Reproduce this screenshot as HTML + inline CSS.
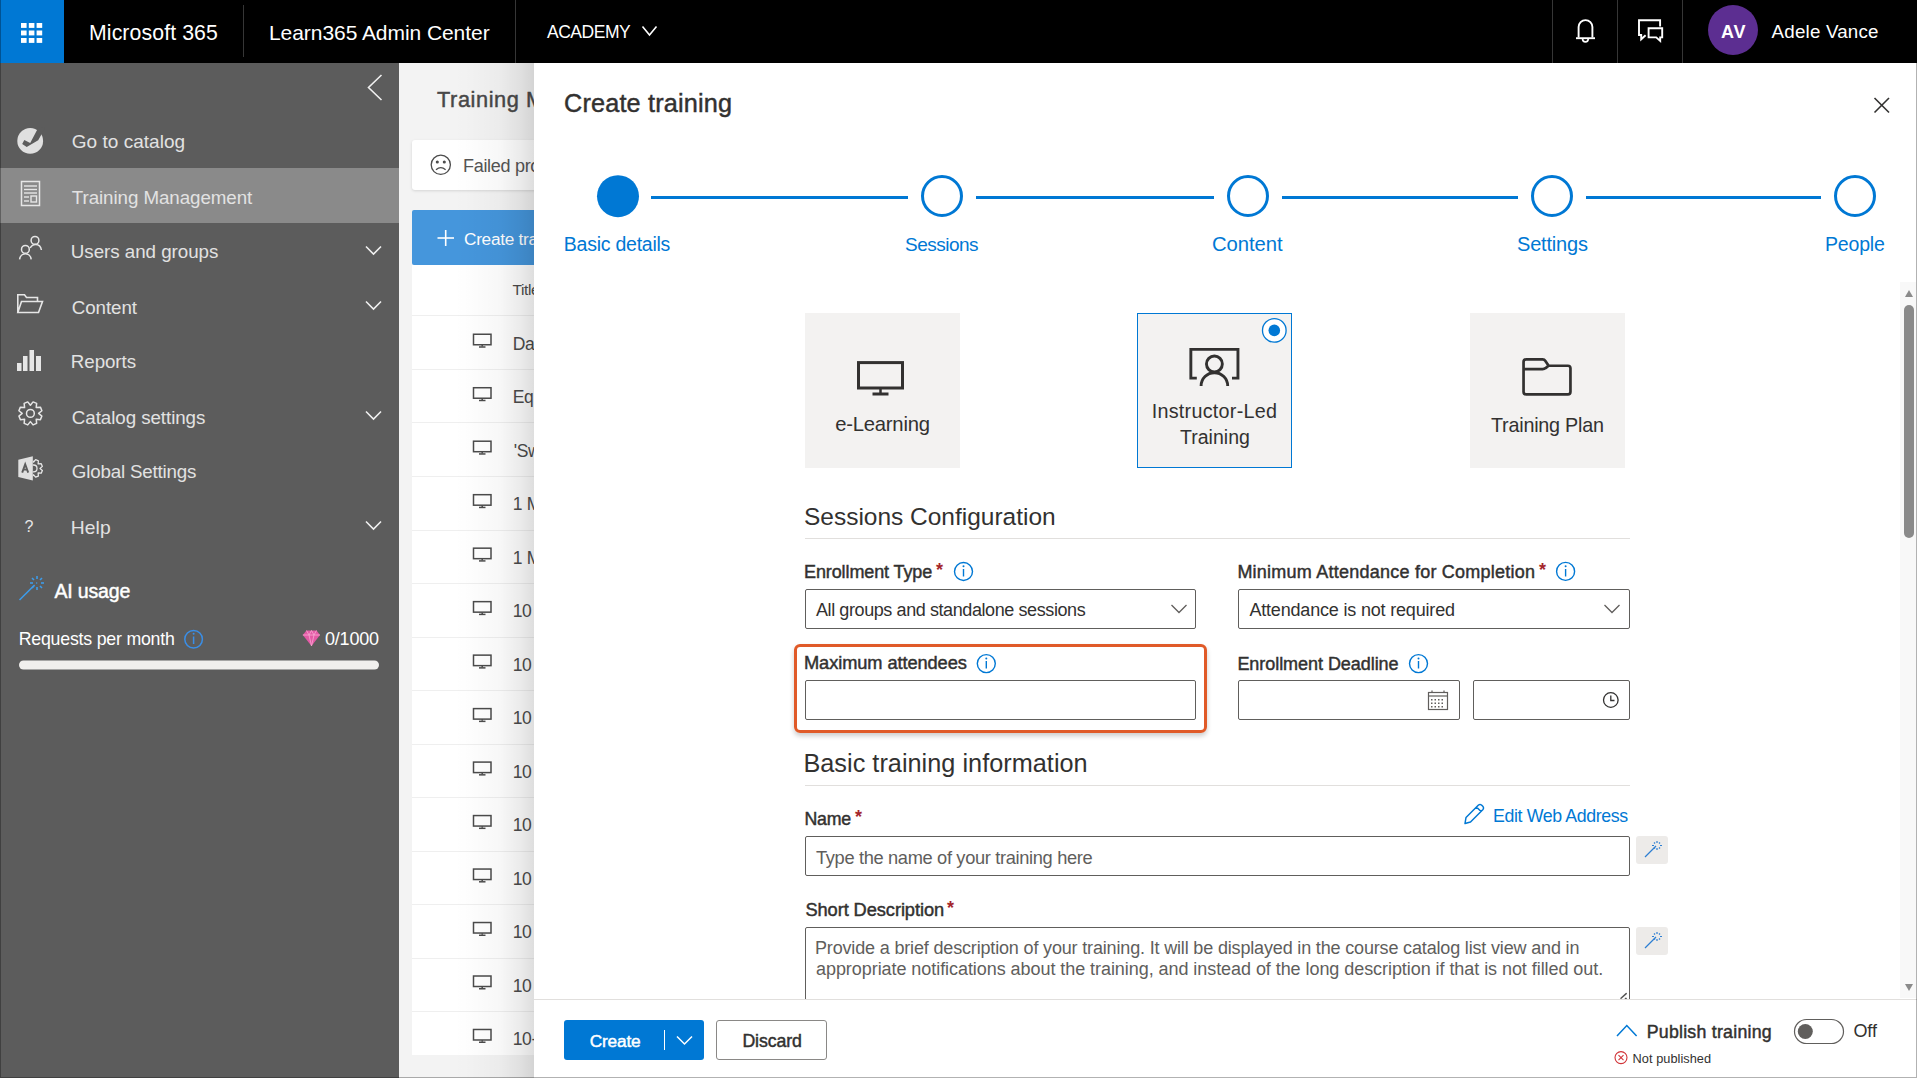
<!DOCTYPE html>
<html><head><meta charset="utf-8"><title>Create training</title>
<style>
html,body{margin:0;padding:0;width:1917px;height:1078px;overflow:hidden;background:#f3f3f3;font-family:"Liberation Sans",sans-serif;}
.a{position:absolute;}
.t{position:absolute;white-space:nowrap;}
svg{position:absolute;overflow:visible;}
#topbar{left:0;top:0;width:1917px;height:63px;background:#000;}
#waffle{left:0;top:0;width:64px;height:63px;background:#0078d4;}
.sep{position:absolute;width:1px;background:#363636;}
#sidebar{left:0;top:63px;width:399px;height:1015px;background:#5c5c5c;}
#sel{left:0;top:168px;width:399px;height:55px;background:#8a8a8a;}
#page{left:399px;top:63px;width:1518px;height:1015px;background:#f3f3f3;}
#panel{left:534px;top:63px;width:1383px;height:1015px;background:#fff;}
.tile{position:absolute;width:155px;height:155px;background:#f3f2f1;box-sizing:border-box;}
.inp{position:absolute;box-sizing:border-box;border:1px solid #605e5c;border-radius:2px;background:#fff;}
.hr{position:absolute;height:1px;background:#e1dfdd;}
.circ{position:absolute;width:42px;height:42px;border-radius:50%;box-sizing:border-box;border:3px solid #0078d4;background:#fff;}
.line{position:absolute;height:3px;background:#0078d4;top:196px;}
.star{position:absolute;color:#a4262c;font-weight:700;}
.row{position:absolute;left:412px;width:700px;height:1px;background:#efefef;}
</style></head><body>
<!-- page behind -->
<div id="page" class="a"></div>
<div class="a" style="left:412px;top:140px;width:600px;height:50px;background:#fff;border-radius:3px;box-shadow:0 1px 3px rgba(0,0,0,0.13);"></div>
<div class="a" style="left:412px;top:210px;width:600px;height:55px;background:#4596dc;border-radius:2px;"></div>
<div class="a" style="left:412px;top:265px;width:600px;height:790px;background:#fff;"></div>
<div id="rows"></div>
<div class="t" id="p0" style="left:437.00px;top:87px;font-size:21.75px;line-height:26px;letter-spacing:0.589px;color:#484848;font-weight:400;-webkit-text-stroke:0.45px #484848;">Training Management</div>
<div class="t" id="p1" style="left:463.00px;top:155px;font-size:18.0px;line-height:22px;letter-spacing:-0.300px;color:#555555;font-weight:400;">Failed processing</div>
<div class="t" id="p2" style="left:464.00px;top:229px;font-size:17.25px;line-height:21px;letter-spacing:-0.300px;color:#fff;font-weight:400;">Create training</div>
<div class="t" id="p3" style="left:512.50px;top:280px;font-size:15.5px;line-height:19px;letter-spacing:-0.381px;color:#4b4b4b;font-weight:400;">Title</div>
<div class="t" id="p4" style="left:512.70px;top:334px;font-size:17.5px;line-height:21px;letter-spacing:-0.300px;color:#4b4b4b;font-weight:400;">Data Protection</div>
<div class="t" id="p5" style="left:512.70px;top:387px;font-size:17.5px;line-height:21px;letter-spacing:-0.300px;color:#4b4b4b;font-weight:400;">Equality</div>
<div class="t" id="p6" style="left:513.70px;top:441px;font-size:17.5px;line-height:21px;letter-spacing:-0.300px;color:#4b4b4b;font-weight:400;">'Swiss</div>
<div class="t" id="p7" style="left:512.70px;top:494px;font-size:17.5px;line-height:21px;letter-spacing:-0.300px;color:#4b4b4b;font-weight:400;">1 Module</div>
<div class="t" id="p8" style="left:512.70px;top:548px;font-size:17.5px;line-height:21px;letter-spacing:-0.300px;color:#4b4b4b;font-weight:400;">1 Module</div>
<div class="t" id="p9" style="left:512.70px;top:601px;font-size:17.5px;line-height:21px;letter-spacing:-0.300px;color:#4b4b4b;font-weight:400;">10 Steps</div>
<div class="t" id="p10" style="left:512.70px;top:655px;font-size:17.5px;line-height:21px;letter-spacing:-0.300px;color:#4b4b4b;font-weight:400;">10 Steps</div>
<div class="t" id="p11" style="left:512.70px;top:708px;font-size:17.5px;line-height:21px;letter-spacing:-0.300px;color:#4b4b4b;font-weight:400;">10 Steps</div>
<div class="t" id="p12" style="left:512.70px;top:762px;font-size:17.5px;line-height:21px;letter-spacing:-0.300px;color:#4b4b4b;font-weight:400;">10 Steps</div>
<div class="t" id="p13" style="left:512.70px;top:815px;font-size:17.5px;line-height:21px;letter-spacing:-0.300px;color:#4b4b4b;font-weight:400;">10 Steps</div>
<div class="t" id="p14" style="left:512.70px;top:869px;font-size:17.5px;line-height:21px;letter-spacing:-0.300px;color:#4b4b4b;font-weight:400;">10 Steps</div>
<div class="t" id="p15" style="left:512.70px;top:922px;font-size:17.5px;line-height:21px;letter-spacing:-0.300px;color:#4b4b4b;font-weight:400;">10 Steps</div>
<div class="t" id="p16" style="left:512.70px;top:976px;font-size:17.5px;line-height:21px;letter-spacing:-0.300px;color:#4b4b4b;font-weight:400;">10 Steps</div>
<div class="t" id="p17" style="left:512.70px;top:1029px;font-size:17.5px;line-height:21px;letter-spacing:-0.300px;color:#4b4b4b;font-weight:400;">10-Minute</div>
<div class="row" style="top:315px;"></div>
<div class="row" style="top:369px;"></div>
<div class="row" style="top:422px;"></div>
<div class="row" style="top:476px;"></div>
<div class="row" style="top:530px;"></div>
<div class="row" style="top:583px;"></div>
<div class="row" style="top:637px;"></div>
<div class="row" style="top:690px;"></div>
<div class="row" style="top:744px;"></div>
<div class="row" style="top:797px;"></div>
<div class="row" style="top:851px;"></div>
<div class="row" style="top:904px;"></div>
<div class="row" style="top:958px;"></div>
<div class="row" style="top:1011px;"></div>
<svg style="left:0;top:0" width="1917" height="1078"><g fill="none" stroke="#4b4b4b" stroke-width="1.5"><rect x="473.5" y="334.25" width="17.5" height="10.5"/><line x1="482.2" y1="345.00" x2="482.2" y2="346.50"/><line x1="479" y1="347.00" x2="485.5" y2="347.00"/><rect x="473.5" y="387.73" width="17.5" height="10.5"/><line x1="482.2" y1="398.48" x2="482.2" y2="399.98"/><line x1="479" y1="400.48" x2="485.5" y2="400.48"/><rect x="473.5" y="441.21" width="17.5" height="10.5"/><line x1="482.2" y1="451.96" x2="482.2" y2="453.46"/><line x1="479" y1="453.96" x2="485.5" y2="453.96"/><rect x="473.5" y="494.69" width="17.5" height="10.5"/><line x1="482.2" y1="505.44" x2="482.2" y2="506.94"/><line x1="479" y1="507.44" x2="485.5" y2="507.44"/><rect x="473.5" y="548.17" width="17.5" height="10.5"/><line x1="482.2" y1="558.92" x2="482.2" y2="560.42"/><line x1="479" y1="560.92" x2="485.5" y2="560.92"/><rect x="473.5" y="601.65" width="17.5" height="10.5"/><line x1="482.2" y1="612.40" x2="482.2" y2="613.90"/><line x1="479" y1="614.40" x2="485.5" y2="614.40"/><rect x="473.5" y="655.13" width="17.5" height="10.5"/><line x1="482.2" y1="665.88" x2="482.2" y2="667.38"/><line x1="479" y1="667.88" x2="485.5" y2="667.88"/><rect x="473.5" y="708.61" width="17.5" height="10.5"/><line x1="482.2" y1="719.36" x2="482.2" y2="720.86"/><line x1="479" y1="721.36" x2="485.5" y2="721.36"/><rect x="473.5" y="762.09" width="17.5" height="10.5"/><line x1="482.2" y1="772.84" x2="482.2" y2="774.34"/><line x1="479" y1="774.84" x2="485.5" y2="774.84"/><rect x="473.5" y="815.57" width="17.5" height="10.5"/><line x1="482.2" y1="826.32" x2="482.2" y2="827.82"/><line x1="479" y1="828.32" x2="485.5" y2="828.32"/><rect x="473.5" y="869.05" width="17.5" height="10.5"/><line x1="482.2" y1="879.80" x2="482.2" y2="881.30"/><line x1="479" y1="881.80" x2="485.5" y2="881.80"/><rect x="473.5" y="922.53" width="17.5" height="10.5"/><line x1="482.2" y1="933.28" x2="482.2" y2="934.78"/><line x1="479" y1="935.28" x2="485.5" y2="935.28"/><rect x="473.5" y="976.01" width="17.5" height="10.5"/><line x1="482.2" y1="986.76" x2="482.2" y2="988.26"/><line x1="479" y1="988.76" x2="485.5" y2="988.76"/><rect x="473.5" y="1029.49" width="17.5" height="10.5"/><line x1="482.2" y1="1040.24" x2="482.2" y2="1041.74"/><line x1="479" y1="1042.24" x2="485.5" y2="1042.24"/></g><g fill="none" stroke="#4b4b4b" stroke-width="1.3"><circle cx="440.8" cy="164.8" r="9.6"/><circle cx="437.3" cy="162" r="0.9" fill="#4b4b4b"/><circle cx="444.3" cy="162" r="0.9" fill="#4b4b4b"/><path d="M436,169.8 Q440.8,165.5 445.6,169.8"/></g><g stroke="#fff" stroke-width="1.6"><line x1="437.5" y1="238" x2="454" y2="238"/><line x1="445.7" y1="230" x2="445.7" y2="246"/></g></svg>
<!-- shadow gradient -->
<div class="a" style="left:454px;top:63px;width:80px;height:1015px;background:linear-gradient(to right,rgba(0,0,0,0) 0%,rgba(0,0,0,0.008) 20%,rgba(0,0,0,0.033) 57.5%,rgba(0,0,0,0.078) 82.5%,rgba(0,0,0,0.13) 100%);"></div>

<!-- top bar -->
<div id="topbar" class="a"></div>
<div id="waffle" class="a"></div>
<svg style="left:0;top:0" width="64" height="63"><g fill="#fff">
<rect x="21" y="23" width="5.6" height="4.9"/><rect x="28.8" y="23" width="5.6" height="4.9"/><rect x="36.6" y="23" width="5.6" height="4.9"/>
<rect x="21" y="30.5" width="5.6" height="4.9"/><rect x="28.8" y="30.5" width="5.6" height="4.9"/><rect x="36.6" y="30.5" width="5.6" height="4.9"/>
<rect x="21" y="38" width="5.6" height="4.9"/><rect x="28.8" y="38" width="5.6" height="4.9"/><rect x="36.6" y="38" width="5.6" height="4.9"/>
</g></svg>
<div class="sep" style="left:243px;top:5px;height:52px;"></div>
<div class="sep" style="left:515px;top:0;height:63px;"></div>
<div class="sep" style="left:1552px;top:0;height:63px;"></div>
<div class="sep" style="left:1617px;top:0;height:63px;"></div>
<div class="sep" style="left:1682px;top:0;height:63px;"></div>
<svg style="left:0;top:0" width="1917" height="63">
<polyline points="642.5,26.5 649.5,35 656.5,26.5" fill="none" stroke="#fff" stroke-width="1.6"/>
<!-- bell -->
<path d="M1578.6,37.5 V27 A6.9,6.9 0 0 1 1592.4,27 V37.5" fill="none" stroke="#fff" stroke-width="1.9"/>
<line x1="1576" y1="38.2" x2="1595" y2="38.2" stroke="#fff" stroke-width="1.9"/>
<path d="M1582.6,39 A2.8,2.8 0 0 0 1588.2,39" fill="none" stroke="#fff" stroke-width="1.7"/>
<!-- chat -->
<path d="M1660.1,26.5 V20.2 H1639 V35 H1641.2 V39.3 L1645.6,35.2" fill="none" stroke="#fff" stroke-width="1.9" stroke-linejoin="miter"/>
<path d="M1648.6,28.3 H1662.2 V37.4 H1660.2 V40.9 L1656.2,37.4 H1648.6 Z" fill="none" stroke="#fff" stroke-width="1.9" stroke-linejoin="miter"/>
<circle cx="1733" cy="30" r="25" fill="#5c2e91"/>
</svg>

<!-- sidebar -->
<div id="sidebar" class="a"></div>
<div id="sel" class="a"></div>
<svg style="left:0;top:0" width="399" height="1078">
<polyline points="381.5,75 368.5,87.5 381.5,100" fill="none" stroke="#f0f0f0" stroke-width="1.6"/>
<!-- check circle -->
<circle cx="30.2" cy="140.9" r="12.9" fill="#e0e0e0"/>
<polygon points="24.3,140 22.2,144.1 26.7,146.9 38.2,140.3 41.4,134.6 45,128 38.9,126.6 30.2,143.1" fill="#5c5c5c"/>
<!-- doc icon -->
<rect x="21.5" y="181.5" width="18" height="24" fill="none" stroke="#e6e6e6" stroke-width="1.5"/>
<g stroke="#e6e6e6" stroke-width="1.4"><line x1="24" y1="186" x2="37" y2="186"/><line x1="24" y1="189.5" x2="37" y2="189.5"/><line x1="24" y1="193" x2="37" y2="193"/><line x1="24" y1="197" x2="29" y2="197"/><line x1="24" y1="201" x2="29" y2="201"/></g>
<rect x="31" y="196" width="5.5" height="6" fill="none" stroke="#e6e6e6" stroke-width="1.4"/>
<!-- users -->
<g fill="none" stroke="#e6e6e6" stroke-width="1.5">
<circle cx="35" cy="240.4" r="3.9"/><path d="M30.2,248 C31.5,245.6 33.5,244.6 35.6,244.6 C38.6,244.6 40.9,246.8 41.4,250"/>
<circle cx="25.4" cy="249.4" r="3.9"/><path d="M19.6,259.3 C20,256 22.5,253.7 25.4,253.7 C28.3,253.7 30.8,256 31.2,259.3"/>
</g>
<!-- folder open -->
<path d="M17.8,312.5 V294.8 H24.5 L26.5,297.5 H37.5 V301.5 M17.8,312.5 L21.5,301.5 H42.5 L38.5,312.5 Z" fill="none" stroke="#e6e6e6" stroke-width="1.6" stroke-linejoin="miter"/>
<!-- bars -->
<g fill="#e6e6e6"><rect x="17" y="363" width="4.5" height="8"/><rect x="23" y="356" width="4.5" height="15"/><rect x="29.5" y="350" width="4.5" height="21"/><rect x="36" y="356" width="5" height="15"/></g>
<!-- gear -->
<path d="M30.40,405.20 L33.05,401.90 L36.65,403.39 L36.20,407.60 L40.41,407.15 L41.90,410.75 L38.60,413.40 L41.90,416.05 L40.41,419.65 L36.20,419.20 L36.65,423.41 L33.05,424.90 L30.40,421.60 L27.75,424.90 L24.15,423.41 L24.60,419.20 L20.39,419.65 L18.90,416.05 L22.20,413.40 L18.90,410.75 L20.39,407.15 L24.60,407.60 L24.15,403.39 L27.75,401.90 Z" fill="none" stroke="#e6e6e6" stroke-width="1.5" stroke-linejoin="round"/>
<circle cx="30.4" cy="413.4" r="3.9" fill="none" stroke="#e6e6e6" stroke-width="1.5"/>
<!-- global settings A+gear -->
<clipPath id="gclip"><rect x="32.8" y="450" width="20" height="40"/></clipPath>
<g clip-path="url(#gclip)"><path d="M33.60,462.00 L35.62,459.63 L38.37,460.77 L38.13,463.87 L41.23,463.63 L42.37,466.38 L40.00,468.40 L42.37,470.42 L41.23,473.17 L38.13,472.93 L38.37,476.03 L35.62,477.17 L33.60,474.80 L31.58,477.17 L28.83,476.03 L29.07,472.93 L25.97,473.17 L24.83,470.42 L27.20,468.40 L24.83,466.38 L25.97,463.63 L29.07,463.87 L28.83,460.77 L31.58,459.63 Z" fill="none" stroke="#e6e6e6" stroke-width="1.3" stroke-linejoin="round"/>
<circle cx="33.6" cy="468.4" r="3.4" fill="none" stroke="#e6e6e6" stroke-width="1.3"/></g>
<path d="M18.3,459.8 L32.8,456.3 V480.4 L18.3,477 Z" fill="#e0e0e0"/>
<path d="M22.2,472.6 L25.2,464.2 L28.2,472.6 M23.3,469.6 H27.1" fill="none" stroke="#5c5c5c" stroke-width="1.9"/>
<text x="24.5" y="532" font-family="Liberation Sans" font-size="16" fill="#e6e6e6">?</text>
<g fill="none" stroke="#f0f0f0" stroke-width="1.6">
<polyline points="366,246.5 373.5,254 381,246.5"/>
<polyline points="366,301.5 373.5,309 381,301.5"/>
<polyline points="366,411.5 373.5,419 381,411.5"/>
<polyline points="366,521.5 373.5,529 381,521.5"/>
</g>
<!-- wand -->
<g stroke="#3d9be9" stroke-width="1.6" fill="none">
<line x1="19.5" y1="600" x2="34.6" y2="585"/><line x1="36.2" y1="583" x2="37.2" y2="583"/>
<line x1="37" y1="576" x2="37" y2="579"/><line x1="37" y1="587" x2="37" y2="590"/>
<line x1="30" y1="583" x2="33" y2="583"/><line x1="41" y1="583" x2="44" y2="583"/>
<line x1="32" y1="578" x2="34" y2="580"/><line x1="40" y1="586" x2="42" y2="588"/>
<line x1="42" y1="578" x2="40" y2="580"/><line x1="34" y1="586" x2="32" y2="588"/>
</g>
<circle cx="193.6" cy="639.2" r="8.8" fill="none" stroke="#3a8ee6" stroke-width="1.5"/>
<line x1="193.6" y1="636.5" x2="193.6" y2="644" stroke="#3a8ee6" stroke-width="1.5"/>
<circle cx="193.6" cy="633.8" r="1" fill="#3a8ee6"/>
<!-- diamond -->
<path d="M302.8,635 L306.5,630.5 H316.5 L320,635 L311.5,646 Z" fill="#e45aa6"/>
<path d="M302.8,635 H320 M306.5,630.5 L309,635 L311.5,646 M316.5,630.5 L314,635 L311.5,646 M309,635 L311.5,630.5 L314,635" fill="none" stroke="#f7a8d2" stroke-width="0.8"/>
<rect x="19" y="660.5" width="360" height="9" rx="4.5" fill="#f0efed"/>
</svg>

<!-- panel shadow + panel -->
<div id="panel" class="a"></div>
<svg style="left:0;top:0" width="1917" height="1078">
<!-- close X -->
<g stroke="#323130" stroke-width="1.6"><line x1="1874.5" y1="98" x2="1889" y2="112.5"/><line x1="1889" y1="98" x2="1874.5" y2="112.5"/></g>
<!-- stepper -->
<circle cx="618" cy="196.2" r="21" fill="#0078d4"/>
</svg>
<div class="line" style="left:651px;width:257px;"></div>
<div class="line" style="left:976px;width:238px;"></div>
<div class="line" style="left:1282px;width:236px;"></div>
<div class="line" style="left:1586px;width:235px;"></div>
<div class="circ" style="left:920.5px;top:175px;"></div>
<div class="circ" style="left:1227px;top:175px;"></div>
<div class="circ" style="left:1531px;top:175px;"></div>
<div class="circ" style="left:1834px;top:175px;"></div>

<!-- scrollbar -->
<div class="a" style="left:1900px;top:282px;width:16px;height:716px;background:#f8f8f8;"></div>
<div class="a" style="left:1904px;top:305px;width:10px;height:233px;background:#8a8a8a;border-radius:5px;"></div>
<svg style="left:0;top:0" width="1917" height="1078">
<path d="M1905,297 L1909,290 L1913,297 Z" fill="#8a8a8a"/>
<path d="M1905,984 L1909,991 L1913,984 Z" fill="#8a8a8a"/>
</svg>

<!-- tiles -->
<div class="tile" style="left:805px;top:313px;"></div>
<div class="tile" style="left:1137px;top:313px;border:1px solid #0078d4;"></div>
<div class="tile" style="left:1470px;top:313px;"></div>
<svg style="left:0;top:0" width="1917" height="1078">
<!-- monitor -->
<rect x="858.5" y="362.6" width="44" height="25.4" fill="none" stroke="#323130" stroke-width="3"/>
<line x1="880.5" y1="389" x2="880.5" y2="393" stroke="#323130" stroke-width="2.5"/>
<line x1="872.5" y1="394" x2="888.5" y2="394" stroke="#323130" stroke-width="3"/>
<!-- instructor -->
<path d="M1196.8,378.1 H1190.85 V349.35 H1237.95 V378.1 H1232" fill="none" stroke="#323130" stroke-width="2.9"/>
<circle cx="1214.4" cy="364" r="7.95" fill="none" stroke="#323130" stroke-width="2.9"/>
<path d="M1201.1,386 A13.3,13.3 0 0 1 1227.7,386" fill="none" stroke="#323130" stroke-width="2.9"/>
<!-- radio -->
<circle cx="1274.3" cy="330.4" r="11.8" fill="#fff" stroke="#0078d4" stroke-width="1.3"/>
<circle cx="1274.3" cy="330.4" r="5.8" fill="#0078d4"/>
<!-- folder -->
<path d="M1523.55,392 V362 Q1523.55,359.45 1526.1,359.45 H1542.6 Q1544.4,359.45 1545.4,361 L1548.6,365.75 H1567.9 Q1570.45,365.75 1570.45,368.3 V391.8 Q1570.45,394.35 1567.9,394.35 H1526.1 Q1523.55,394.35 1523.55,391.8 Z M1523.55,369.2 H1542.6 Q1544.4,369.2 1545.6,368.1 L1548.6,365.75" fill="none" stroke="#323130" stroke-width="2.7" stroke-linejoin="round"/>
</svg>

<div class="hr" style="left:805px;top:538px;width:825px;"></div>
<div class="hr" style="left:805px;top:785px;width:825px;"></div>
<!-- inputs -->
<div class="inp" style="left:805px;top:589px;width:391px;height:40px;"></div>
<div class="inp" style="left:1238px;top:589px;width:392px;height:40px;"></div>
<div class="inp" style="left:805px;top:680px;width:391px;height:40px;"></div>
<div class="inp" style="left:1238px;top:680px;width:222px;height:40px;"></div>
<div class="inp" style="left:1473px;top:680px;width:157px;height:40px;"></div>
<div class="inp" style="left:805px;top:836px;width:825px;height:40px;"></div>
<div class="inp" style="left:805px;top:927px;width:825px;height:90px;"></div>
<!-- highlight -->
<div class="a" style="left:794px;top:644px;width:413px;height:89px;box-sizing:border-box;border:3px solid #e05a28;border-radius:6px;box-shadow:0 3px 5px rgba(0,0,0,0.2);"></div>
<div class="a" style="left:1636px;top:836px;width:32px;height:28px;background:#edebe9;border-radius:3px;"></div>
<div class="a" style="left:1636px;top:927px;width:32px;height:28px;background:#edebe9;border-radius:3px;"></div>
<svg style="left:0;top:0" width="1917" height="1078">
<g fill="none" stroke="#605e5c" stroke-width="1.3">
<polyline points="1171.5,605 1179,612.5 1186.5,605"/>
<polyline points="1604.5,605 1612,612.5 1619.5,605"/>
</g>
<line x1="1621" y1="998.3" x2="1626.2" y2="993.6" stroke="#555" stroke-width="1.5" stroke-linecap="round"/><line x1="1625.3" y1="998.3" x2="1626.3" y2="998.3" stroke="#555" stroke-width="1.3" stroke-linecap="round"/>
<!-- info icons -->
<g fill="none" stroke="#0078d4" stroke-width="1.4">
<circle cx="963.5" cy="571.5" r="9"/><circle cx="1565.6" cy="571.4" r="9"/><circle cx="986.3" cy="663.6" r="9"/><circle cx="1418.5" cy="663.6" r="9"/>
<line x1="963.5" y1="569" x2="963.5" y2="576.5"/><line x1="1565.6" y1="569" x2="1565.6" y2="576.5"/><line x1="986.3" y1="661" x2="986.3" y2="668.5"/><line x1="1418.5" y1="661" x2="1418.5" y2="668.5"/>
</g>
<g fill="#0078d4"><circle cx="963.5" cy="566.3" r="1"/><circle cx="1565.6" cy="566.3" r="1"/><circle cx="986.3" cy="658.4" r="1"/><circle cx="1418.5" cy="658.4" r="1"/></g>
<!-- calendar -->
<g fill="none" stroke="#605e5c" stroke-width="1.2">
<rect x="1428.5" y="692.5" width="19" height="17"/>
<line x1="1428.5" y1="696" x2="1447.5" y2="696"/>
<line x1="1432" y1="690.5" x2="1432" y2="693"/><line x1="1444" y1="690.5" x2="1444" y2="693"/>
</g>
<g fill="#605e5c">
<rect x="1431" y="699" width="1.5" height="1.5"/><rect x="1434.5" y="699" width="1.5" height="1.5"/><rect x="1438" y="699" width="1.5" height="1.5"/><rect x="1441.5" y="699" width="1.5" height="1.5"/>
<rect x="1431" y="702.5" width="1.5" height="1.5"/><rect x="1434.5" y="702.5" width="1.5" height="1.5"/><rect x="1438" y="702.5" width="1.5" height="1.5"/><rect x="1441.5" y="702.5" width="1.5" height="1.5"/>
<rect x="1431" y="706" width="1.5" height="1.5"/><rect x="1434.5" y="706" width="1.5" height="1.5"/><rect x="1438" y="706" width="1.5" height="1.5"/><rect x="1441.5" y="706" width="1.5" height="1.5"/>
</g>
<!-- clock -->
<circle cx="1610.8" cy="700" r="7.3" fill="none" stroke="#323130" stroke-width="1.3"/>
<polyline points="1610.8,695.5 1610.8,700.5 1614.5,700.5" fill="none" stroke="#323130" stroke-width="1.3"/>
<!-- pencil -->
<path d="M1465,823.5 L1466,817.5 L1478.5,805 Q1480,803.8 1481.5,805 L1483,806.5 Q1484.2,808 1483,809.5 L1470.5,822 Z M1476.5,807 L1481,811.5" fill="none" stroke="#0078d4" stroke-width="1.5" stroke-linejoin="round"/>
<!-- wand buttons -->
<g stroke="#2d7fd3" stroke-width="1.2" fill="none">
<line x1="1645" y1="857" x2="1656" y2="846"/>
<line x1="1657" y1="841" x2="1657" y2="843"/><line x1="1657" y1="848" x2="1657" y2="850"/>
<line x1="1652" y1="845.5" x2="1654" y2="845.5"/><line x1="1660" y1="845.5" x2="1662" y2="845.5"/>
<line x1="1654" y1="842.5" x2="1655" y2="843.5"/><line x1="1659" y1="847.5" x2="1660" y2="848.5"/>
<line x1="1660" y1="842.5" x2="1659" y2="843.5"/><line x1="1655" y1="847.5" x2="1654" y2="848.5"/>
</g>
<g stroke="#2d7fd3" stroke-width="1.2" fill="none" transform="translate(0,91)">
<line x1="1645" y1="857" x2="1656" y2="846"/>
<line x1="1657" y1="841" x2="1657" y2="843"/><line x1="1657" y1="848" x2="1657" y2="850"/>
<line x1="1652" y1="845.5" x2="1654" y2="845.5"/><line x1="1660" y1="845.5" x2="1662" y2="845.5"/>
<line x1="1654" y1="842.5" x2="1655" y2="843.5"/><line x1="1659" y1="847.5" x2="1660" y2="848.5"/>
<line x1="1660" y1="842.5" x2="1659" y2="843.5"/><line x1="1655" y1="847.5" x2="1654" y2="848.5"/>
</g>
</svg>

<!-- footer: cover textarea overflow -->
<div class="a" style="left:534px;top:999px;width:1383px;height:78px;background:#fff;border-top:1px solid #e1dfdd;"></div>
<div class="a" style="left:564px;top:1020px;width:140px;height:40px;background:#0078d4;border-radius:3px;"></div>
<div class="a" style="left:664px;top:1030px;width:1px;height:20px;background:#fff;"></div>
<div class="a" style="left:716px;top:1020px;width:111px;height:40px;box-sizing:border-box;border:1px solid #8a8886;border-radius:3px;background:#fff;"></div>
<svg style="left:0;top:0" width="1917" height="1078">
<polyline points="677,1036.5 684.5,1044 692,1036.5" fill="none" stroke="#fff" stroke-width="1.5"/>
<polyline points="1617,1036 1626.8,1025.5 1636.6,1036" fill="none" stroke="#0078d4" stroke-width="1.5"/>
<rect x="1794.5" y="1019.5" width="49" height="24" rx="12" fill="#fff" stroke="#605e5c" stroke-width="1.2"/>
<circle cx="1805.3" cy="1031.5" r="7.5" fill="#605e5c"/>
<circle cx="1621" cy="1057.6" r="6" fill="none" stroke="#d13438" stroke-width="1.1"/>
<g stroke="#d13438" stroke-width="1.1"><line x1="1618.5" y1="1055.1" x2="1623.5" y2="1060.1"/><line x1="1623.5" y1="1055.1" x2="1618.5" y2="1060.1"/></g>
</svg>

<div class="t" id="t0" style="left:89.00px;top:20px;font-size:21.25px;line-height:26px;letter-spacing:0.106px;color:#fff;font-weight:400;">Microsoft 365</div>
<div class="t" id="t1" style="left:269.00px;top:20px;font-size:21.0px;line-height:25px;letter-spacing:-0.059px;color:#fff;font-weight:400;">Learn365 Admin Center</div>
<div class="t" id="t2" style="left:547.00px;top:22px;font-size:17.5px;line-height:21px;letter-spacing:-0.478px;color:#fff;font-weight:400;">ACADEMY</div>
<div class="t" id="t3" style="left:1721.00px;top:21px;font-size:18.0px;line-height:22px;letter-spacing:0.837px;color:#fff;font-weight:700;">AV</div>
<div class="t" id="t4" style="left:1771.60px;top:21px;font-size:18.75px;line-height:22px;letter-spacing:0.189px;color:#fff;font-weight:400;">Adele Vance</div>
<div class="t" id="t5" style="left:71.80px;top:130px;font-size:19.0px;line-height:23px;letter-spacing:0.021px;color:#e2e2e2;font-weight:400;">Go to catalog</div>
<div class="t" id="t6" style="left:71.80px;top:187px;font-size:18.75px;line-height:22px;letter-spacing:-0.071px;color:#e2e2e2;font-weight:400;">Training Management</div>
<div class="t" id="t7" style="left:70.80px;top:241px;font-size:18.75px;line-height:22px;letter-spacing:-0.028px;color:#e2e2e2;font-weight:400;">Users and groups</div>
<div class="t" id="t8" style="left:71.80px;top:297px;font-size:18.75px;line-height:22px;letter-spacing:-0.077px;color:#e2e2e2;font-weight:400;">Content</div>
<div class="t" id="t9" style="left:70.80px;top:351px;font-size:18.75px;line-height:22px;letter-spacing:-0.063px;color:#e2e2e2;font-weight:400;">Reports</div>
<div class="t" id="t10" style="left:71.80px;top:407px;font-size:18.75px;line-height:22px;letter-spacing:-0.059px;color:#e2e2e2;font-weight:400;">Catalog settings</div>
<div class="t" id="t11" style="left:71.80px;top:461px;font-size:18.75px;line-height:22px;letter-spacing:-0.184px;color:#e2e2e2;font-weight:400;">Global Settings</div>
<div class="t" id="t12" style="left:70.80px;top:516px;font-size:19.25px;line-height:23px;letter-spacing:0.105px;color:#e2e2e2;font-weight:400;">Help</div>
<div class="t" id="t13" style="left:54.50px;top:580px;font-size:19.5px;line-height:23px;letter-spacing:-0.175px;color:#fff;font-weight:400;-webkit-text-stroke:0.45px #fff;">AI usage</div>
<div class="t" id="t14" style="left:18.70px;top:629px;font-size:17.75px;line-height:21px;letter-spacing:-0.216px;color:#fff;font-weight:400;">Requests per month</div>
<div class="t" id="t15" style="left:325.00px;top:628px;font-size:18.0px;line-height:22px;letter-spacing:-0.209px;color:#fff;font-weight:400;">0/1000</div>
<div class="t" id="t16" style="left:564.00px;top:88px;font-size:25.25px;line-height:30px;letter-spacing:0.173px;color:#323130;font-weight:400;-webkit-text-stroke:0.45px #323130;">Create training</div>
<div class="t" id="t17" style="left:563.80px;top:233px;font-size:19.5px;line-height:23px;letter-spacing:-0.243px;color:#0078d4;font-weight:400;">Basic details</div>
<div class="t" id="t18" style="left:905.00px;top:233px;font-size:19.0px;line-height:23px;letter-spacing:-0.514px;color:#0078d4;font-weight:400;">Sessions</div>
<div class="t" id="t19" style="left:1212.00px;top:232px;font-size:20.25px;line-height:24px;letter-spacing:-0.050px;color:#0078d4;font-weight:400;">Content</div>
<div class="t" id="t20" style="left:1517.00px;top:232px;font-size:20.0px;line-height:24px;letter-spacing:-0.181px;color:#0078d4;font-weight:400;">Settings</div>
<div class="t" id="t21" style="left:1825.00px;top:233px;font-size:19.5px;line-height:23px;letter-spacing:-0.175px;color:#0078d4;font-weight:400;">People</div>
<div class="t" id="t22" style="left:835.20px;top:412px;font-size:20.25px;line-height:24px;letter-spacing:-0.229px;color:#323130;font-weight:400;">e-Learning</div>
<div class="t" id="t23" style="left:1151.70px;top:399px;font-size:19.75px;line-height:24px;letter-spacing:0.264px;color:#323130;font-weight:400;">Instructor-Led</div>
<div class="t" id="t24" style="left:1180.00px;top:426px;font-size:19.5px;line-height:23px;letter-spacing:0.017px;color:#323130;font-weight:400;">Training</div>
<div class="t" id="t25" style="left:1491.00px;top:413px;font-size:19.75px;line-height:24px;letter-spacing:-0.221px;color:#323130;font-weight:400;">Training Plan</div>
<div class="t" id="t26" style="left:804.00px;top:502px;font-size:24.5px;line-height:29px;letter-spacing:-0.015px;color:#323130;font-weight:400;">Sessions Configuration</div>
<div class="t" id="t27" style="left:804.00px;top:561px;font-size:18.0px;line-height:22px;letter-spacing:-0.104px;color:#323130;font-weight:400;-webkit-text-stroke:0.45px #323130;">Enrollment Type</div>
<div class="t" id="t28" style="left:816.00px;top:599px;font-size:18.0px;line-height:22px;letter-spacing:-0.409px;color:#323130;font-weight:400;">All groups and standalone sessions</div>
<div class="t" id="t29" style="left:1237.40px;top:561px;font-size:18.0px;line-height:22px;letter-spacing:0.234px;color:#323130;font-weight:400;-webkit-text-stroke:0.45px #323130;">Minimum Attendance for Completion</div>
<div class="t" id="t30" style="left:1249.40px;top:599px;font-size:18.0px;line-height:22px;letter-spacing:-0.181px;color:#323130;font-weight:400;">Attendance is not required</div>
<div class="t" id="t31" style="left:804.00px;top:652px;font-size:18.25px;line-height:22px;letter-spacing:-0.094px;color:#323130;font-weight:400;-webkit-text-stroke:0.45px #323130;">Maximum attendees</div>
<div class="t" id="t32" style="left:1237.40px;top:653px;font-size:18.0px;line-height:22px;letter-spacing:-0.049px;color:#323130;font-weight:400;-webkit-text-stroke:0.45px #323130;">Enrollment Deadline</div>
<div class="t" id="t33" style="left:803.40px;top:748px;font-size:25.25px;line-height:30px;letter-spacing:0.030px;color:#323130;font-weight:400;">Basic training information</div>
<div class="t" id="t34" style="left:804.40px;top:809px;font-size:17.75px;line-height:21px;letter-spacing:-0.225px;color:#323130;font-weight:400;-webkit-text-stroke:0.45px #323130;">Name</div>
<div class="t" id="t35" style="left:1493.00px;top:806px;font-size:17.75px;line-height:21px;letter-spacing:-0.371px;color:#0078d4;font-weight:400;">Edit Web Address</div>
<div class="t" id="t36" style="left:816.00px;top:847px;font-size:18.25px;line-height:22px;letter-spacing:-0.337px;color:#605e5c;font-weight:400;">Type the name of your training here</div>
<div class="t" id="t37" style="left:805.40px;top:899px;font-size:18.25px;line-height:22px;letter-spacing:-0.077px;color:#323130;font-weight:400;-webkit-text-stroke:0.45px #323130;">Short Description</div>
<div class="t" id="t38" style="left:815.00px;top:937px;font-size:18.0px;line-height:22px;letter-spacing:-0.163px;color:#605e5c;font-weight:400;">Provide a brief description of your training. It will be displayed in the course catalog list view and in</div>
<div class="t" id="t39" style="left:816.00px;top:958px;font-size:18.0px;line-height:22px;letter-spacing:-0.059px;color:#605e5c;font-weight:400;">appropriate notifications about the training, and instead of the long description if that is not filled out.</div>
<div class="t" id="t40" style="left:589.80px;top:1031px;font-size:17.25px;line-height:21px;letter-spacing:-0.196px;color:#fff;font-weight:400;-webkit-text-stroke:0.45px #fff;">Create</div>
<div class="t" id="t41" style="left:742.40px;top:1031px;font-size:17.75px;line-height:21px;letter-spacing:-0.116px;color:#323130;font-weight:400;-webkit-text-stroke:0.45px #323130;">Discard</div>
<div class="t" id="t42" style="left:1646.70px;top:1022px;font-size:17.75px;line-height:21px;letter-spacing:0.241px;color:#323130;font-weight:400;-webkit-text-stroke:0.45px #323130;">Publish training</div>
<div class="t" id="t43" style="left:1853.40px;top:1020px;font-size:18.0px;line-height:22px;letter-spacing:-0.038px;color:#323130;font-weight:400;">Off</div>
<div class="t" id="t44" style="left:1632.60px;top:1051px;font-size:12.75px;line-height:15px;letter-spacing:0.043px;color:#323130;font-weight:400;">Not published</div>
<div class="star" style="left:936px;top:561px;font-size:18px;line-height:18px;">*</div>
<div class="star" style="left:1539px;top:561px;font-size:18px;line-height:18px;">*</div>
<div class="star" style="left:855px;top:808px;font-size:18px;line-height:18px;">*</div>
<div class="star" style="left:947px;top:899px;font-size:18px;line-height:18px;">*</div>
<div class="a" style="left:0;top:0;width:1917px;height:1078px;box-sizing:border-box;border:1px solid rgba(0,0,0,0.3);border-top:none;"></div>
</body></html>
